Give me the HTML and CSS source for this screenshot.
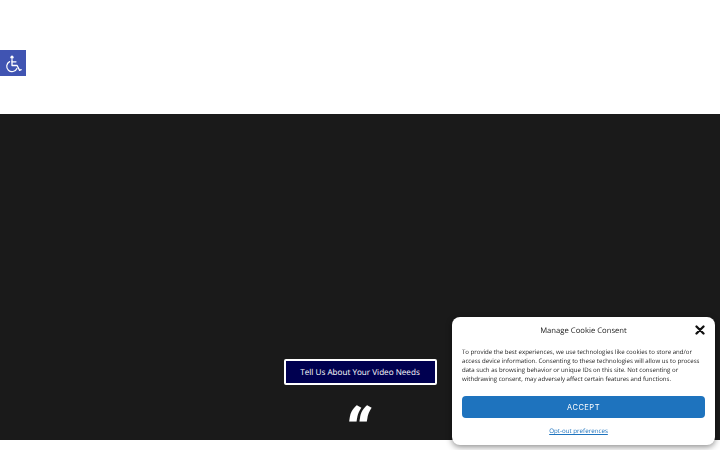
FILE: index.html
```html
<!DOCTYPE html>
<html lang="en">
<head>
    <meta charset="UTF-8">
    <meta name="viewport" content="width=device-width, initial-scale=1.0">
    <title>Tell Us About Your Video Needs</title>
    <link rel="stylesheet" href="styles.css">
</head>
<body>
    <a class="a11y-toggle" href="#" aria-label="Open accessibility tools">
        <svg xmlns="http://www.w3.org/2000/svg" viewBox="0 0 26 26" fill="none" stroke="#fff" stroke-linecap="round" stroke-linejoin="round">
            <circle cx="12" cy="7.2" r="1.6" fill="#fff" stroke="none"/>
            <path d="M12 9.6v5.9h5.1l2.5 4.9 1.6-.7" stroke-width="1.3"/>
            <path d="M12 11.8h4" stroke-width="1.2"/>
            <path d="M9.6 11.6a5.3 5.3 0 1 0 7.3 6.8" stroke-width="1.2"/>
        </svg>
    </a>

    <header class="top-space"></header>

    <section class="hero">
        <a class="hero-btn" href="#">Tell Us About Your Video Needs</a>
        <div class="hero-quote">&ldquo;</div>
    </section>

    <div class="cookie-box">
        <div class="cookie-head">
            <h2>Manage Cookie Consent</h2>
            <button class="cookie-close" aria-label="Close">
                <svg xmlns="http://www.w3.org/2000/svg" viewBox="0 0 10 10">
                    <path d="M1.5 1.5l7 7M8.5 1.5l-7 7" stroke="#111" stroke-width="2.3" stroke-linecap="round"/>
                </svg>
            </button>
        </div>
        <p>To provide the best experiences, we use technologies like cookies to store and/or access device information. Consenting to these technologies will allow us to process data such as browsing behavior or unique IDs on this site. Not consenting or withdrawing consent, may adversely affect certain features and functions.</p>
        <button class="cookie-accept">ACCEPT</button>
        <a class="cookie-link" href="#">Opt-out preferences</a>
    </div>
</body>
</html>
```

FILE: styles.css
```css
* {
    margin: 0;
    padding: 0;
    box-sizing: border-box;
}

html,
body {
    height: 450px;
    overflow: hidden;
}

body {
    font-family: "Open Sans", "Liberation Sans", sans-serif;
    background-color: #fff;
    color: #333;
    text-rendering: geometricPrecision;
}

.top-space {
    height: 114px;
}

.hero {
    height: 326px;
    background-color: #1a1a1a;
    display: flex;
    flex-direction: column;
    align-items: center;
    padding-top: 245px;
}

.hero-btn {
    display: flex;
    align-items: center;
    justify-content: center;
    flex-shrink: 0;
    width: 153px;
    height: 26px;
    background-color: #000050;
    border: 2px solid #fff;
    border-radius: 2px;
    color: #fff;
    font-size: 8.15px;
    font-weight: 500;
    text-decoration: none;
}

.hero-quote {
    margin-top: 41px;
    margin-right: 7px;
    height: 14px;
    color: #fff;
    font-family: "Roboto", sans-serif;
    font-size: 62px;
    font-weight: 900;
    font-style: italic;
    line-height: 14px;
}

.a11y-toggle {
    position: absolute;
    top: 50px;
    left: 0;
    width: 26px;
    height: 26px;
    background-color: #4054b2;
}

.a11y-toggle svg {
    display: block;
    width: 26px;
    height: 26px;
}

.cookie-box {
    position: fixed;
    left: 452px;
    top: 317px;
    width: 263px;
    height: 128px;
    padding: 0 10px;
    background-color: #fff;
    border-radius: 8px;
    box-shadow: 0 2px 6px rgba(0, 0, 0, 0.45);
    display: flex;
    flex-direction: column;
}

.cookie-head {
    height: 28px;
    display: flex;
    align-items: center;
    justify-content: center;
    position: relative;
}

.cookie-head h2 {
    font-size: 7.7px;
    font-weight: 400;
    color: #222;
}

.cookie-close {
    position: absolute;
    right: 0;
    top: 8px;
    width: 10px;
    height: 10px;
    border: none;
    background: none;
}

.cookie-close svg {
    display: block;
    width: 10px;
    height: 10px;
}

.cookie-box p {
    margin-top: 2px;
    font-size: 6.1px;
    line-height: 9px;
    color: #222;
}

.cookie-accept {
    margin-top: 13px;
    height: 22px;
    flex-shrink: 0;
    border: none;
    border-radius: 4px;
    background-color: #1e73be;
    color: #fff;
    font-family: "Inter", sans-serif;
    font-size: 7.5px;
    font-weight: 400;
    letter-spacing: 0.5px;
}

.cookie-link {
    margin-top: 8px;
    padding-right: 10px;
    text-align: center;
    font-size: 6.2px;
    color: #1e73be;
}
```
